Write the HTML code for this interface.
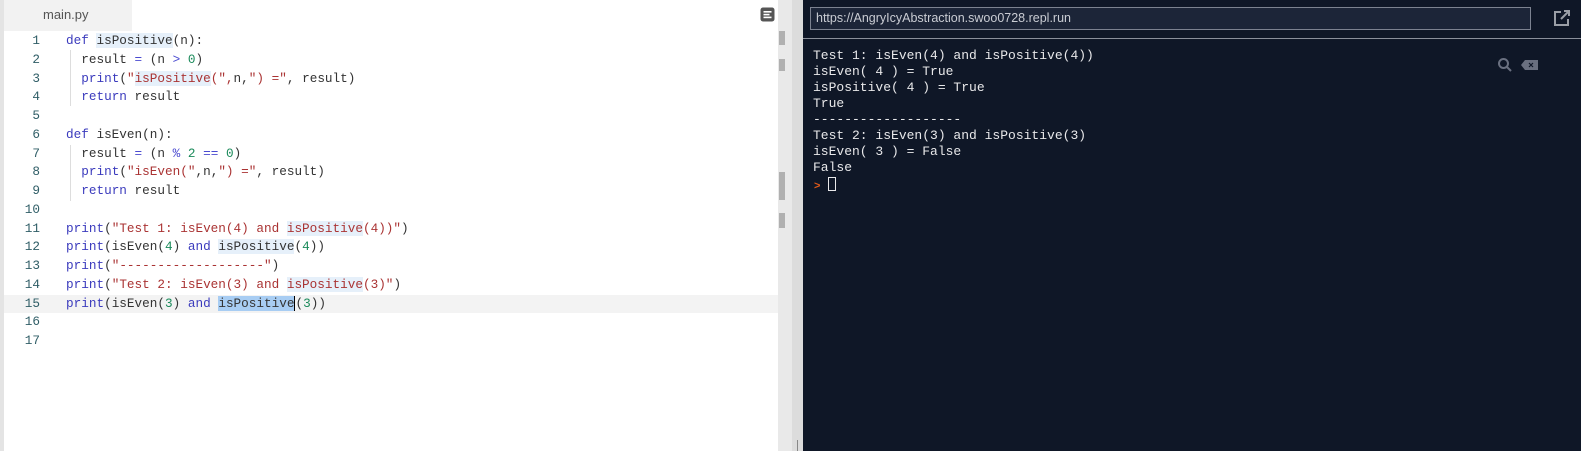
<!DOCTYPE html>
<html><head><meta charset="utf-8"><style>
*{margin:0;padding:0;box-sizing:border-box}
body{width:1581px;height:451px;overflow:hidden;background:#fff;position:relative;font-family:"Liberation Sans",sans-serif}
.lborder{position:absolute;left:0;top:0;width:4px;height:451px;background:#e4e4e4}
.tabbar{position:absolute;left:4px;top:0;width:128px;height:31px;background:#f2f2f2;font-size:13px;color:#555;padding:7px 0 0 39px}
.code{position:absolute;left:0;top:32px;font-family:"Liberation Mono",monospace;font-size:12.7px;color:#333}
.ln{position:relative;height:18.75px;line-height:18.75px;white-space:pre}
.ln .n{position:absolute;left:4px;width:36px;text-align:right;color:#2f5d66}
.ln .c{position:absolute;left:66px}
.cur{background:#f3f3f3;width:774px;left:4px}
.k{color:#3b3bbd}.s{color:#a33}.d{color:#1a8a5a}.op{color:#4a4ad0}
.h{background:#e6f0fa}.hs{background:#a8cdf3}
.guide{position:absolute;left:70px;width:1px;background:#ddd}
.track{position:absolute;left:778px;top:0;width:14px;height:451px;background:#e9e9e9}
.track2{position:absolute;left:792px;top:0;width:11px;height:451px;background:#dcdcdc}
.mk{position:absolute;left:779px;width:6px;background:#b0b0b0}
.term{position:absolute;left:803px;top:0;width:778px;height:451px;background:#0f1727}
.url{position:absolute;left:7px;top:7px;width:721px;height:23px;border:1px solid #7c8290;background:#1c2538;color:#c9ccd3;font-size:12.5px;padding:3px 0 0 5px}
.sep{position:absolute;left:0;top:38px;width:778px;height:1px;background:#8a8f9a}
.out{position:absolute;left:10px;top:48px;font-family:"Liberation Mono","Courier New",monospace;font-size:13px;line-height:16px;color:#e8e8ea;white-space:pre}
</style></head><body>
<div class="lborder"></div>
<div class="tabbar">main.py</div>
<div class="code">
<div class="ln"><span class="n">1</span><span class="c"><span class="k">def</span> <span class="h">isPositive</span>(n):</span></div>
<div class="ln"><span class="n">2</span><span class="c">  result <span class="op">=</span> (n <span class="op">&gt;</span> <span class="d">0</span>)</span></div>
<div class="ln"><span class="n">3</span><span class="c">  <span class="k">print</span>(<span class="s">"<span class="h">isPositive</span>(",</span>n,<span class="s">") ="</span>, result)</span></div>
<div class="ln"><span class="n">4</span><span class="c">  <span class="k">return</span> result</span></div>
<div class="ln"><span class="n">5</span></div>
<div class="ln"><span class="n">6</span><span class="c"><span class="k">def</span> isEven(n):</span></div>
<div class="ln"><span class="n">7</span><span class="c">  result <span class="op">=</span> (n <span class="op">%</span> <span class="d">2</span> <span class="op">==</span> <span class="d">0</span>)</span></div>
<div class="ln"><span class="n">8</span><span class="c">  <span class="k">print</span>(<span class="s">"isEven("</span>,n,<span class="s">") ="</span>, result)</span></div>
<div class="ln"><span class="n">9</span><span class="c">  <span class="k">return</span> result</span></div>
<div class="ln"><span class="n">10</span></div>
<div class="ln"><span class="n">11</span><span class="c"><span class="k">print</span>(<span class="s">"Test 1: isEven(4) and <span class="h">isPositive</span>(4))"</span>)</span></div>
<div class="ln"><span class="n">12</span><span class="c"><span class="k">print</span>(isEven(<span class="d">4</span>) <span class="k">and</span> <span class="h">isPositive</span>(<span class="d">4</span>))</span></div>
<div class="ln"><span class="n">13</span><span class="c"><span class="k">print</span>(<span class="s">"-------------------"</span>)</span></div>
<div class="ln"><span class="n">14</span><span class="c"><span class="k">print</span>(<span class="s">"Test 2: isEven(3) and <span class="h">isPositive</span>(3)"</span>)</span></div>
<div class="ln"><div class="cur" style="position:absolute;top:0;height:18.75px"></div><span class="n">15</span><span class="c"><span class="k">print</span>(isEven(<span class="d">3</span>) <span class="k">and</span> <span class="hs">isPositive</span><span style="border-left:1.5px solid #000">(</span><span class="d">3</span>))</span></div>
<div class="ln"><span class="n">16</span></div>
<div class="ln"><span class="n">17</span></div>
</div>
<div class="guide" style="top:50px;height:56px"></div>
<div class="guide" style="top:145px;height:56px"></div>
<svg style="position:absolute;left:760px;top:7px" width="15" height="15" viewBox="0 0 15 15"><rect x="0.5" y="0.5" width="14" height="14" rx="2.5" fill="#555"/><rect x="3.5" y="4" width="8" height="1.6" fill="#fff"/><rect x="3.5" y="6.8" width="6" height="1.6" fill="#fff"/><rect x="3.5" y="9.6" width="8" height="1.6" fill="#fff"/></svg>
<div class="track"></div><div class="track2"></div>
<div class="mk" style="top:31px;height:14px"></div>
<div class="mk" style="top:59px;height:12px"></div>
<div class="mk" style="top:172px;height:28px"></div>
<div class="mk" style="top:213px;height:15px"></div>
<div style="position:absolute;left:797px;top:440px;width:1px;height:11px;background:#888"></div>
<div class="term">
<div class="url">https://AngryIcyAbstraction.swoo0728.repl.run</div>
<svg style="position:absolute;left:750px;top:9px" width="18" height="18" viewBox="0 0 18 18" fill="none" stroke="#9a9ea6" stroke-width="2"><path d="M8 3H2v13h13v-6"/><path d="M8 10L16 2M11 2h5v5"/></svg>
<div class="sep"></div>
<svg style="position:absolute;left:694px;top:57px" width="16" height="16" viewBox="0 0 16 16" fill="none" stroke="#6a7080" stroke-width="2"><circle cx="6.5" cy="6.5" r="4.5"/><path d="M10 10l4 4"/></svg>
<svg style="position:absolute;left:718px;top:60px" width="17" height="10" viewBox="0 0 17 10"><path d="M4 0h13v10H4L0 5z" fill="#6a7080"/><path d="M8 3l4 4M12 3l-4 4" stroke="#0f1727" stroke-width="1.2"/></svg>
<div class="out">Test 1: isEven(4) and isPositive(4))
isEven( 4 ) = True
isPositive( 4 ) = True
True
-------------------
Test 2: isEven(3) and isPositive(3)
isEven( 3 ) = False
False</div>
<div style="position:absolute;left:11px;top:180px;color:#e05a1a;font-size:11px;font-weight:bold">&gt;</div>
<div style="position:absolute;left:25px;top:177px;width:8px;height:14px;border:1px solid #e8e8ea"></div>
</div>
</body></html>
